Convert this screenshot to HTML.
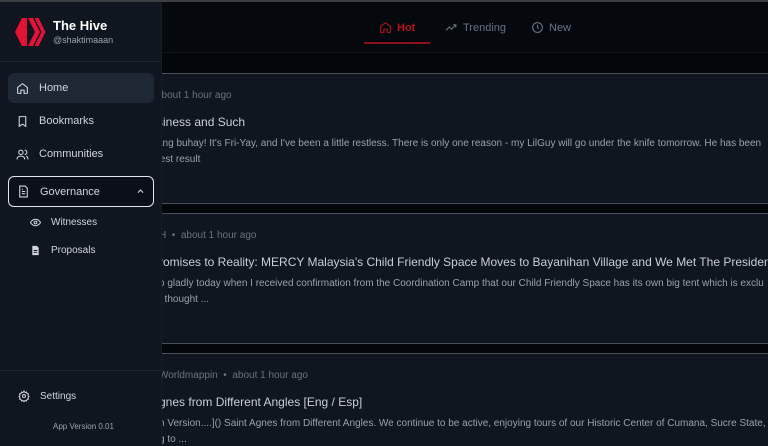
<!DOCTYPE html>
<html><head><meta charset="utf-8"><style>
*{margin:0;padding:0;box-sizing:border-box}
html,body{width:768px;height:446px;overflow:hidden}
body{background:#05080d;font-family:"Liberation Sans",sans-serif;position:relative}
.top{position:absolute;left:0;top:0;width:768px;height:2px;background:#3a3d42}
.hdr{position:absolute;left:162px;top:2px;right:0;height:50px;background:#05080d}
.tab{position:absolute;top:19px;font-size:11px;color:#6b7280;display:flex;align-items:center;gap:5px}
.band{position:absolute;left:162px;right:0;top:52px;height:21px;background:#03060a;border-top:1px solid #0e131a}
.card{position:absolute;left:162px;right:0;background:#10161f;border-top:1px solid #4a4f56;border-bottom:1px solid #4a4f56;overflow:hidden}
.gap{position:absolute;left:162px;right:0;height:10px;background:#03060a}
.meta{position:absolute;font-size:10px;color:#6b7280;white-space:nowrap}
.title{position:absolute;font-size:12px;color:#c9ced6;white-space:nowrap}
.body{position:absolute;font-size:10px;color:#9aa1ab;line-height:16px;white-space:nowrap}
.side{position:absolute;left:0;top:2px;width:162px;height:444px;background:#0f1620;border-right:1px solid #151c26}
.item{position:absolute;left:8px;width:146px;height:30px;display:flex;align-items:center;padding-left:8px;gap:10px;font-size:11px;color:#d1d5db;border-radius:6px}
svg{flex:none}
</style></head><body>
<div class="top"></div>
<div class="hdr">
<div class="tab" style="left:217px;color:#b3141f;font-weight:bold"><svg width="13" height="13" viewBox="0 0 24 24" fill="none" stroke="#b3141f" stroke-width="2"><path d="M3 10l9-7 9 7v10a1 1 0 0 1-1 1h-5v-6h-6v6H4a1 1 0 0 1-1-1z"/></svg>Hot</div>
<div style="position:absolute;left:202px;top:40px;width:66px;height:2px;background:#8b1018"></div>
<div class="tab" style="left:283px"><svg width="13" height="13" viewBox="0 0 24 24" fill="none" stroke="#6b7280" stroke-width="2"><path d="M2 17l6-6 4 4 8-8M15 7h5v5"/></svg>Trending</div>
<div class="tab" style="left:369px"><svg width="13" height="13" viewBox="0 0 24 24" fill="none" stroke="#6b7280" stroke-width="2"><circle cx="12" cy="12" r="9"/><path d="M12 7v5l3 2"/></svg>New</div>
</div>
<div class="band"></div>
<div class="card" style="top:73px;height:131px">
<div class="meta" style="left:-6px;top:16px">about 1 hour ago</div>
<div class="title" style="left:-5px;top:41px">siness and Such</div>
<div class="body" style="left:-5px;top:62px">ang buhay! It's Fri-Yay, and I've been a little restless. There is only one reason - my LilGuy will go under the knife tomorrow. He has been<br>test result</div>
</div>
<div class="gap" style="top:204px"></div>
<div class="card" style="top:213px;height:131px">
<div class="meta" style="left:-3px;top:16px">H &nbsp;•&nbsp; about 1 hour ago</div>
<div class="title" style="left:-3px;top:41px">romises to Reality: MERCY Malaysia's Child Friendly Space Moves to Bayanihan Village and We Met The President of The</div>
<div class="body" style="left:-3px;top:62px">o gladly today when I received confirmation from the Coordination Camp that our Child Friendly Space has its own big tent which is exclu<br>I thought ...</div>
</div>
<div class="gap" style="top:344px"></div>
<div class="card" style="top:353px;height:93px;border-bottom:none">
<div class="meta" style="left:-3px;top:16px">Worldmappin &nbsp;•&nbsp; about 1 hour ago</div>
<div class="title" style="left:-3px;top:41px">gnes from Different Angles [Eng / Esp]</div>
<div class="body" style="left:-3px;top:62px">n Version....]() Saint Agnes from Different Angles. We continue to be active, enjoying tours of our Historic Center of Cumana, Sucre State,<br>g to ...</div>
</div>
<div class="side">
<svg style="position:absolute;left:15px;top:16px" width="31" height="28" viewBox="0 0 31 28"><path d="M7 0h5v28H7L0 14z" fill="#e31337"/><path d="M13 0h5l7 14-7 14h-5l7-14z" fill="#e31337"/><path d="M19.5 0h4l7 14-7 14h-4l7-14z" fill="#e31337"/></svg>
<div style="position:absolute;left:53px;top:16px;font-size:13px;font-weight:bold;color:#fff">The Hive</div>
<div style="position:absolute;left:53px;top:33px;font-size:9px;color:#9ca3af">@shaktimaaan</div>
<div style="position:absolute;left:0;top:59px;width:162px;height:1px;background:#1b2430"></div>
<div class="item" style="top:71px;background:#1e2835"><svg width="13" height="13" viewBox="0 0 24 24" fill="none" stroke="#d1d5db" stroke-width="2"><path d="M3 10l9-7 9 7v10a1 1 0 0 1-1 1h-5v-6h-6v6H4a1 1 0 0 1-1-1z"/></svg>Home</div>
<div class="item" style="top:104px"><svg width="13" height="13" viewBox="0 0 24 24" fill="none" stroke="#d1d5db" stroke-width="2"><path d="M6 3h12v18l-6-4-6 4z"/></svg>Bookmarks</div>
<div class="item" style="top:137px"><svg width="13" height="13" viewBox="0 0 24 24" fill="none" stroke="#d1d5db" stroke-width="2"><circle cx="9" cy="8" r="4"/><path d="M2 21c0-4 3-6 7-6s7 2 7 6M16 4a4 4 0 0 1 0 8M19 15c2 1 3 3 3 6"/></svg>Communities</div>
<div class="item" style="top:174px;height:31px;border:1.5px solid #e5e7eb;background:#0b1018"><svg width="13" height="13" viewBox="0 0 24 24" fill="none" stroke="#d1d5db" stroke-width="2"><path d="M5 2h10l4 4v16H5z M9 12h6M9 16h6M9 8h2"/></svg>Governance<svg style="position:absolute;right:8px" width="9" height="9" viewBox="0 0 24 24" fill="none" stroke="#d1d5db" stroke-width="3"><path d="M5 15l7-7 7 7"/></svg></div>
<div class="item" style="top:205px;left:22px;font-size:10px"><svg width="11" height="11" viewBox="0 0 24 24" fill="none" stroke="#d1d5db" stroke-width="2.2"><path d="M1 12s4-7 11-7 11 7 11 7-4 7-11 7S1 12 1 12z"/><circle cx="12" cy="12" r="3"/></svg>Witnesses</div>
<div class="item" style="top:233px;left:22px;font-size:10px"><svg width="11" height="11" viewBox="0 0 24 24" fill="#d1d5db"><path d="M5 2h10l4 4v16H5z"/><path d="M8 12h8M8 16h8" stroke="#0f1620" stroke-width="2"/></svg>Proposals</div>
<div style="position:absolute;left:0;top:368px;width:162px;height:1px;background:#1b2430"></div>
<div class="item" style="top:379px;left:10px;font-size:10px"><svg width="12" height="12" viewBox="0 0 24 24" fill="none" stroke="#d1d5db" stroke-width="2"><circle cx="12" cy="12" r="3"/><path d="M12 2l2 3 3-1 1 3 3 1-1 3 2 2-2 2 1 3-3 1-1 3-3-1-2 3-2-3-3 1-1-3-3-1 1-3-2-2 2-2-1-3 3-1 1-3 3 1z"/></svg>Settings</div>
<div style="position:absolute;left:53px;top:420px;font-size:8px;color:#9ca3af">App Version 0.01</div>
</div>
</body></html>
